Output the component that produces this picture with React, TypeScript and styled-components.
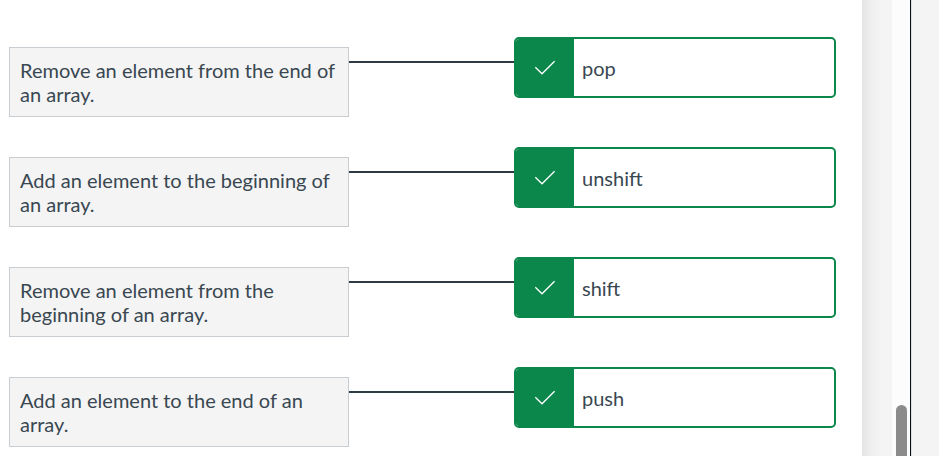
import React from "react";
import styled, { createGlobalStyle } from "styled-components";

const GlobalStyle = createGlobalStyle`
  * { box-sizing: border-box; }
  body {
    margin: 0;
    background: #f4f4f4;
    font-family: Lato, "Liberation Sans", sans-serif;
    font-size: 20px;
    line-height: 24px;
    color: #394751;
    overflow: hidden;
  }
`;

const Page = styled.div`
  display: flex;
  height: 100vh;
  overflow: hidden;
`;

const Sheet = styled.main`
  flex: 1;
  min-width: 0;
  padding: 37px 26px 0 9px;
  background: #fff;
`;

const Gutter = styled.div`
  width: 30px;
  background: linear-gradient(to right, #e4e4e4, #eeeeee 8px, #f4f4f4 20px);
`;

const Track = styled.div`
  width: 18px;
  display: flex;
  flex-direction: column;
  justify-content: flex-end;
  padding: 0 3px 0 4px;
  background: #fcfcfc;
`;

const Thumb = styled.div`
  height: 51px;
  border-radius: 6px 6px 0 0;
  background: #8b8b8b;
`;

const Edge = styled.div`
  width: 29px;
  border-left: 1px solid #0c0f12;
  box-shadow: inset 1px 0 #dcdfe1;
`;

const Matches = styled.ul`
  display: grid;
  gap: 30px;
  margin: 0;
  padding: 0;
  list-style: none;
`;

const Match = styled.li`
  display: grid;
  grid-template-columns: 340fr 165fr 322fr;
  align-items: start;
`;

const Prompt = styled.div`
  margin-top: 10px;
  padding: 10px;
  border: 1px solid #c7cdd1;
  background: #f4f4f4;
`;

const Connector = styled.div`
  margin-top: 24px;
  border-top: 2px solid #2d3b45;
`;

const Answer = styled.div`
  display: flex;
  min-height: 61px;
  border: 2px solid #0b874b;
  border-radius: 5px;
  overflow: hidden;
  background: #fff;
`;

const Status = styled.span`
  display: flex;
  align-items: center;
  justify-content: center;
  width: 58px;
  background: #0b874b;
`;

const Term = styled.span`
  align-self: center;
  padding: 0 8px;
`;

const pairs = [
  { prompt: "Remove an element from the end of an array.", answer: "pop" },
  { prompt: "Add an element to the beginning of an array.", answer: "unshift" },
  { prompt: "Remove an element from the beginning of an array.", answer: "shift" },
  { prompt: "Add an element to the end of an array.", answer: "push" },
];

const Check = () => (
  <svg width="22" height="21" viewBox="0 0 22 21" role="img" fill="none" aria-label="Correct">
    <path d="M1.3 10.2 L8 16.8 L20.6 4.2" stroke="#fff" strokeWidth="1.3" />
  </svg>
);

export default function App() {
  return (
    <>
      <GlobalStyle />
      <Page>
        <Sheet>
          <Matches>
            {pairs.map(({ prompt, answer }) => (
              <Match key={answer}>
                <Prompt>{prompt}</Prompt>
                <Connector />
                <Answer>
                  <Status><Check /></Status>
                  <Term>{answer}</Term>
                </Answer>
              </Match>
            ))}
          </Matches>
        </Sheet>
        <Gutter />
        <Track><Thumb /></Track>
        <Edge />
      </Page>
    </>
  );
}
